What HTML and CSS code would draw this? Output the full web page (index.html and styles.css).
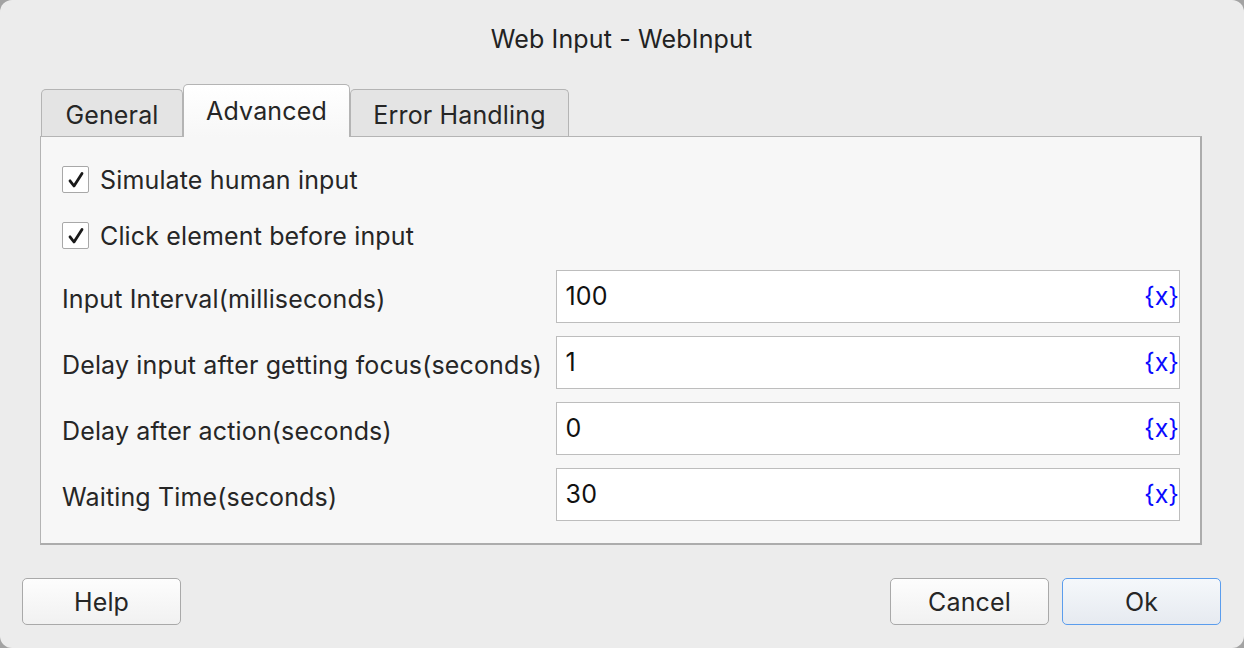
FILE: index.html
```html
<!DOCTYPE html>
<html>
<head>
<meta charset="utf-8">
<link rel="stylesheet" href="styles.css">
</head>
<body>
<div class="window">
  <div class="title">Web Input - WebInput</div>
  <div class="tabs-area">
    <div class="tabs">
      <div class="tab tab-general">General</div>
      <div class="tab tab-active">Advanced</div>
      <div class="tab tab-error">Error Handling</div>
    </div>
    <div class="panel">
      <label class="check-row first">
        <span class="checkbox"><svg width="18" height="18" viewBox="0 0 18 18"><path d="M3 9.8 L7 15 L15 2.5" fill="none" stroke="#1a1a1a" stroke-width="2.8" stroke-linecap="round" stroke-linejoin="round"/></svg></span>
        <span class="check-text">Simulate human input</span>
      </label>
      <label class="check-row second">
        <span class="checkbox"><svg width="18" height="18" viewBox="0 0 18 18"><path d="M3 9.8 L7 15 L15 2.5" fill="none" stroke="#1a1a1a" stroke-width="2.8" stroke-linecap="round" stroke-linejoin="round"/></svg></span>
        <span class="check-text">Click element before input</span>
      </label>
      <div class="field-row">
        <div class="field-label">Input Interval(milliseconds)</div>
        <div class="field-input"><span class="value">100</span><span class="var">{x}</span></div>
      </div>
      <div class="field-row">
        <div class="field-label">Delay input after getting focus(seconds)</div>
        <div class="field-input"><span class="value">1</span><span class="var">{x}</span></div>
      </div>
      <div class="field-row">
        <div class="field-label">Delay after action(seconds)</div>
        <div class="field-input"><span class="value">0</span><span class="var">{x}</span></div>
      </div>
      <div class="field-row">
        <div class="field-label">Waiting Time(seconds)</div>
        <div class="field-input"><span class="value">30</span><span class="var">{x}</span></div>
      </div>
    </div>
  </div>
  <div class="buttons">
    <button class="btn">Help</button>
    <div class="spacer"></div>
    <button class="btn">Cancel</button>
    <button class="btn btn-default">Ok</button>
  </div>
</div>
</body>
</html>
```
FILE: styles.css
```css
* { box-sizing: border-box; }
html, body {
  margin: 0;
  padding: 0;
  width: 1244px;
  height: 648px;
  overflow: hidden;
  background: #a3a3a3;
}
body {
  font-family: "Inter", "Roboto", "Liberation Sans", sans-serif;
  color: #262626;
  letter-spacing: 0.15px;
}
.window {
  width: 1244px;
  height: 648px;
  background: #ececec;
  border-radius: 12px;
  display: flex;
  flex-direction: column;
  padding: 0 23px 0 22px;
}
.title {
  height: 84px;
  padding-top: 24px;
  line-height: 30px;
  font-size: 25px;
  text-align: center;
  color: #222;
}
.tabs-area {
  margin: 0 19px 0 18px;
  display: flex;
  flex-direction: column;
}
.tabs {
  display: flex;
  align-items: flex-end;
  height: 52px;
  padding-left: 1px;
}
.tab {
  height: 47px;
  border: 1.5px solid #b4b4b4;
  border-bottom: none;
  border-radius: 5px 5px 0 0;
  background: #e4e4e4;
  font-size: 25px;
  line-height: 30px;
  padding-top: 10px;
  text-align: center;
  color: #262626;
}
.tab-general { width: 142px; }
.tab-active {
  width: 167px;
  padding-top: 11px;
  background: linear-gradient(#ffffff, #f7f7f7);
  margin-bottom: -1px;
  height: 53px;
  position: relative;
  z-index: 1;
}
.tab-error { width: 219px; }
.panel {
  height: 409px;
  background: #f7f7f7;
  border: 1px solid #b4b4b4;
  border-right: 2px solid #acacac;
  border-bottom: 2px solid #acacac;
  padding: 29px 20px 0 21px;
  display: flex;
  flex-direction: column;
}
.check-row {
  display: flex;
  align-items: center;
  height: 27px;
}
.check-row.second { margin-top: 29px; margin-bottom: 21px; }
.checkbox {
  width: 27px;
  height: 27px;
  border: 1.5px solid #a8a8a8;
  background: #fff;
  border-radius: 2px;
  display: flex;
  align-items: center;
  justify-content: center;
}
.check-text {
  margin-left: 11px;
  font-size: 25px;
  line-height: 30px;
}
.field-row {
  display: flex;
  align-items: center;
  height: 52px;
  margin-bottom: 14px;
}
.field-label {
  width: 494px;
  font-size: 25px;
  line-height: 30px;
  padding-top: 5px;
  white-space: nowrap;
}
.field-input {
  width: 625px;
  height: 53px;
  background: #fff;
  border: 1.5px solid #bdbdbd;
  display: flex;
  align-items: center;
  justify-content: space-between;
  padding: 0 0 0 9px;
  font-size: 25px;
}
.value { color: #111; }
.var {
  color: #0a0aff;
  font-size: 25px;
  letter-spacing: 0;
}
.buttons {
  display: flex;
  align-items: center;
  margin-top: 33px;
}
.spacer { flex: 1; }
.btn {
  width: 159px;
  height: 47px;
  font-family: inherit;
  font-size: 25px;
  letter-spacing: 0.15px;
  color: #262626;
  border: 1.5px solid #a9a9a9;
  border-radius: 5px;
  background: linear-gradient(#fdfdfd, #f1f1f1);
  padding: 0;
}
.btn-default {
  margin-left: 13px;
  border: 1.5px solid #5b9ded;
  background: linear-gradient(#f5f8fb, #e6eaf0);
}
```
